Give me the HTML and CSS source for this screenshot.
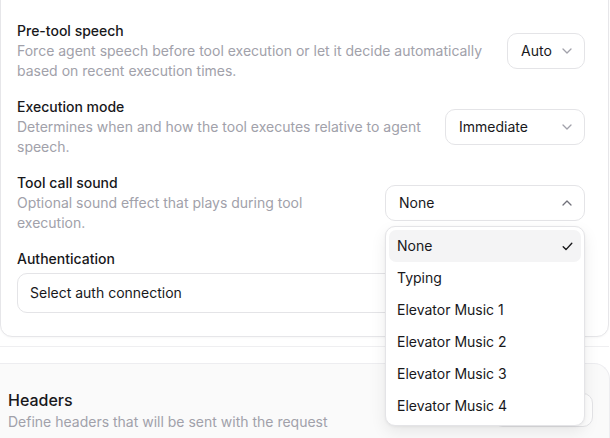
FILE: index.html
```html
<!DOCTYPE html>
<html>
<head>
<meta charset="utf-8">
<link rel="stylesheet" href="styles.css">
</head>
<body>
<div class="outer">
  <div class="card">
    <div class="row first">
      <div class="text">
        <div class="title">Disable interruptions</div>
        <div class="desc">Select this box to disable interruptions while the tool is running.</div>
      </div>
    </div>
    <div class="row">
      <div class="text">
        <div class="title">Pre-tool speech</div>
        <div class="desc">Force agent speech before tool execution or let it decide automatically based on recent execution times.</div>
      </div>
      <div class="select w-auto">
        <span>Auto</span>
        <svg class="chev" width="10" height="6" viewBox="0 0 10 6"><path d="M1 1l4 4 4-4" fill="none" stroke="#a1a1aa" stroke-width="1.3" stroke-linecap="round" stroke-linejoin="round"/></svg>
      </div>
    </div>
    <div class="row">
      <div class="text">
        <div class="title">Execution mode</div>
        <div class="desc">Determines when and how the tool executes relative to agent speech.</div>
      </div>
      <div class="select w-imm">
        <span>Immediate</span>
        <svg class="chev" width="10" height="6" viewBox="0 0 10 6"><path d="M1 1l4 4 4-4" fill="none" stroke="#a1a1aa" stroke-width="1.3" stroke-linecap="round" stroke-linejoin="round"/></svg>
      </div>
    </div>
    <div class="row">
      <div class="text">
        <div class="title">Tool call sound</div>
        <div class="desc">Optional sound effect that plays during tool execution.</div>
      </div>
      <div class="select-wrap">
        <div class="select w-none">
          <span>None</span>
          <svg class="chev" width="10" height="6" viewBox="0 0 10 6"><path d="M1 5l4-4 4 4" fill="none" stroke="#71717a" stroke-width="1.3" stroke-linecap="round" stroke-linejoin="round"/></svg>
        </div>
        <div class="menu">
          <div class="item active"><span>None</span>
            <svg width="11" height="9" viewBox="0 0 11 9"><path d="M1.2 4.8l2.8 2.8 5.8-6.4" fill="none" stroke="#18181b" stroke-width="1.4" stroke-linecap="round" stroke-linejoin="round"/></svg>
          </div>
          <div class="item">Typing</div>
          <div class="item">Elevator Music 1</div>
          <div class="item">Elevator Music 2</div>
          <div class="item">Elevator Music 3</div>
          <div class="item">Elevator Music 4</div>
        </div>
      </div>
    </div>
    <div class="auth">
      <div class="title">Authentication</div>
      <div class="input">Select auth connection</div>
    </div>
  </div>
</div>
<div class="headers">
  <div class="text">
    <div class="h-title">Headers</div>
    <div class="desc">Define headers that will be sent with the request</div>
  </div>
  <div class="btn">Add header</div>
</div>
</body>
</html>
```
FILE: styles.css
```css
* { box-sizing: border-box; }
html, body { margin: 0; padding: 0; background: #ffffff; overflow: hidden; }
body {
  font-family: Inter, "Noto Sans", "Liberation Sans", sans-serif;
  font-size: 14px;
  line-height: 20px;
  color: #18181b;
  width: 610px;
  height: 438px;
}
.outer {
  border-bottom: 1px solid #efeff1;
  padding-bottom: 9px;
  width: 609px;
}
.card {
  margin-top: -60px;
  width: 609px;
  border: 1px solid #e6e6e9;
  border-radius: 12px;
  padding: 24px 23px 23px 16px;
  display: flex;
  flex-direction: column;
  gap: 16px;
  background: #fff;
  box-shadow: 0 1px 2px rgba(0,0,0,0.03);
}
.row {
  display: flex;
  align-items: center;
  gap: 24px;
}
.row.first { margin-top: -3px; margin-bottom: 3px; }
.text { flex: 1; min-width: 0; }
.title { font-weight: 500; color: #18181b; }
.desc { color: #a1a1aa; }
.select {
  height: 36px;
  border: 1px solid #e4e4e7;
  border-radius: 10px;
  padding: 0 12px 0 13px;
  display: flex;
  align-items: center;
  justify-content: space-between;
  background: #fff;
  color: #18181b;
}
.w-auto { width: 78px; }
.w-imm { width: 140px; }
.w-none { width: 200px; }
.select-wrap { position: relative; }
.menu {
  position: absolute;
  top: 41px;
  right: 0;
  width: 200px;
  background: #fff;
  border: 1px solid #e4e4e7;
  border-radius: 10px;
  padding: 3px;
  box-shadow: 0 6px 16px rgba(0,0,0,0.08), 0 1px 3px rgba(0,0,0,0.05);
  z-index: 10;
}
.item {
  height: 32px;
  padding: 0 8px 0 8px;
  display: flex;
  align-items: center;
  justify-content: space-between;
  border-radius: 7px;
  color: #18181b;
}
.item.active { background: #f4f4f5; }
.auth { display: flex; flex-direction: column; gap: 4px; }
.input {
  height: 40px;
  border: 1px solid #e4e4e7;
  border-radius: 10px;
  padding: 0 12px;
  display: flex;
  align-items: center;
  color: #18181b;
}
.headers {
  margin-top: 16px;
  width: 610px;
  background: #fafafa;
  border-top: 1px solid #ededf0;
  border-right: 1px solid #ededf0;
  border-radius: 0 16px 0 0;
  padding: 24px 16px 10px 8px;
  display: flex;
  align-items: center;
  gap: 24px;
}
.h-title { font-size: 16px; line-height: 24px; font-weight: 500; color: #18181b; }
.btn {
  width: 100px;
  height: 34px;
  border: 1px solid #e4e4e7;
  border-radius: 10px;
  background: #fff;
  display: flex;
  align-items: center;
  justify-content: center;
  font-weight: 500;
}
```
